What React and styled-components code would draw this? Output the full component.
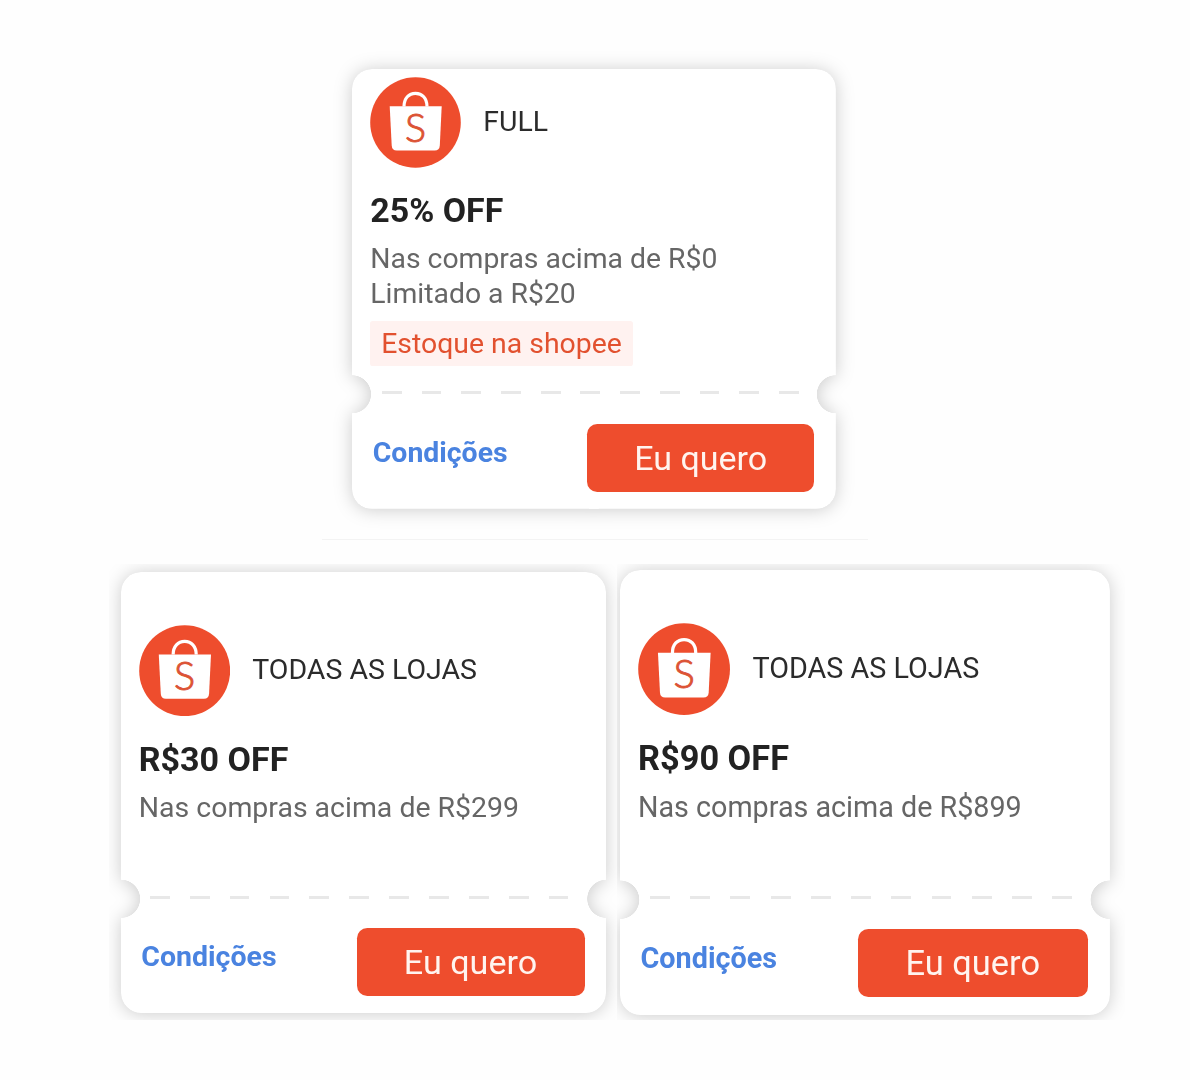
import React from 'react';
import styled, { createGlobalStyle } from 'styled-components';

const GlobalStyle = createGlobalStyle`
  * {
    box-sizing: border-box;
  }
  body {
    margin: 0;
    background: #fefefe;
    font-family: Roboto, 'Liberation Sans', sans-serif;
  }
`;

const Page = styled.main`
  width: 1190px;
  height: 1080px;
  padding-top: 48px;
  display: flex;
  flex-direction: column;
  overflow: hidden;
`;

const Featured = styled.section`
  width: 546px;
  height: 492px;
  margin-left: 322px;
  padding: 21.4px 0 0 30.3px;
  border-bottom: 1px solid #f3f3f3;
`;

const Row = styled.section`
  display: flex;
  margin: 24px 0 0 109px;
`;

const Frame = styled.div`
  width: 508px;
  height: 456px;
  padding: ${p => p.$pad};
  overflow: hidden;
`;

const Shadow = styled.div`
  font-size: ${p => p.$size}px;
  filter: drop-shadow(0 1px 9px rgba(0, 0, 0, 0.2));
`;

// the two radial masks cut the notches out of the sides
const Ticket = styled.article`
  width: 48.35em;
  height: 43.95em;
  display: flex;
  flex-direction: column;
  background: #fff;
  border-radius: 2em;
  mask:
    radial-gradient(circle 1.93em at 0 32.55em, transparent 97%, #000 100%) left / 51% 100% no-repeat,
    radial-gradient(circle 1.93em at 100% 32.55em, transparent 97%, #000 100%) right / 51% 100% no-repeat;
`;

const Info = styled.div`
  height: 30.45em;
  padding-left: 1.8em;
  display: flex;
  flex-direction: column;
  justify-content: center;
  align-items: flex-start;
`;

const Store = styled.div`
  display: flex;
  align-items: center;
  gap: 2.2em;
  color: #2b2b2b;
`;

const LogoSvg = styled.svg`
  width: 9.1em;
  height: 9.1em;
`;

const StoreName = styled.span`
  font-size: 2.84em;
  line-height: 1;
`;

const Discount = styled.h2`
  margin: 0.67em 0 0.33em;
  font-size: 3.39em;
  line-height: 1.176;
  font-weight: 700;
  color: #222;
`;

const Rule = styled.p`
  margin: 0;
  font-size: 2.835em;
  line-height: 1.234;
  color: #666;
`;

const Tag = styled.span`
  margin-top: 0.34em;
  padding: 0 0.385em;
  font-size: 2.84em;
  line-height: 1.585;
  border-radius: 0.1em;
  background: #fff2f0;
  color: #e2512f;
`;

const Perforation = styled.div`
  width: 41.7em;
  height: 0.3em;
  margin: 1.76em 0 0 2.95em;
  background: repeating-linear-gradient(90deg, #e8e8e8 0 1.97em, transparent 1.97em 3.97em);
`;

const Actions = styled.div`
  margin-top: 2.93em;
  padding: 0 2.15em 0 2.05em;
  display: flex;
  justify-content: space-between;
  align-items: flex-start;
`;

const Terms = styled.a`
  font-size: 2.84em;
  line-height: 2.05;
  font-weight: 700;
  color: #4a83e0;
`;

const Button = styled.button`
  width: 6.68em;
  height: 2em;
  padding: 0;
  border: none;
  border-radius: 0.3em;
  background: #ee4d2d;
  color: #fff4ef;
  font-family: inherit;
  font-size: 3.4em;
  cursor: pointer;
`;

const Logo = () => (
  <LogoSvg viewBox="0 0 91 91">
    <circle cx="45.5" cy="45.5" r="45.3" fill="#ee4d2d" />
    <path d="M34 29.5C34 21 39 16.3 45.5 16.3S57 21 57 29.5" fill="none" stroke="#fff" strokeWidth="3.2" />
    <path d="M19.7 29.3H71.7L69.8 68.5Q69.5 73.5 64.7 73.5H26.8Q22 73.5 21.7 68.5Z" fill="#fff" />
    <text
      x="45.5"
      y="64.6"
      textAnchor="middle"
      fontFamily="Lato, sans-serif"
      fontWeight="300"
      fontSize="39.5"
      fill="#dc5335"
      stroke="#dc5335"
      strokeWidth="0.9"
    >
      S
    </text>
  </LogoSvg>
);

const Coupon = ({ size, store, discount, rules, tag }) => (
  <Shadow $size={size}>
    <Ticket>
      <Info>
        <Store>
          <Logo />
          <StoreName>{store}</StoreName>
        </Store>
        <Discount>{discount}</Discount>
        {rules.map(rule => (
          <Rule key={rule}>{rule}</Rule>
        ))}
        {tag && <Tag>{tag}</Tag>}
      </Info>
      <Perforation />
      <Actions>
        <Terms>Condições</Terms>
        <Button type="button">Eu quero</Button>
      </Actions>
    </Ticket>
  </Shadow>
);

const App = () => (
  <>
    <GlobalStyle />
    <Page>
      <Featured>
        <Coupon
          size={10}
          store="FULL"
          discount="25% OFF"
          rules={['Nas compras acima de R$0', 'Limitado a R$20']}
          tag="Estoque na shopee"
        />
      </Featured>
      <Row>
        <Frame $pad="8.2px 0 0 11.7px">
          <Coupon
            size={10.04}
            store="TODAS AS LOJAS"
            discount="R$30 OFF"
            rules={['Nas compras acima de R$299']}
          />
        </Frame>
        <Frame $pad="5.6px 0 0 2.8px">
          <Coupon
            size={10.13}
            store="TODAS AS LOJAS"
            discount="R$90 OFF"
            rules={['Nas compras acima de R$899']}
          />
        </Frame>
      </Row>
    </Page>
  </>
);

export default App;
